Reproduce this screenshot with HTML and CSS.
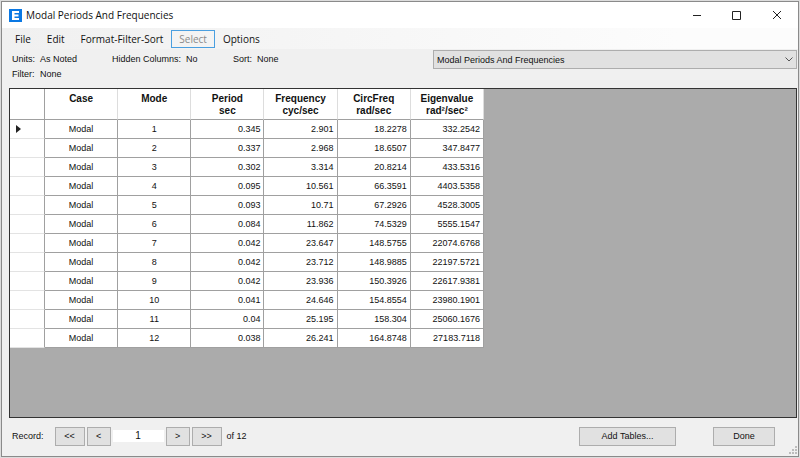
FILE: index.html
```html
<!DOCTYPE html>
<html lang="en">
  <head>
    <meta charset="UTF-8" />
    <meta name="viewport" content="width=device-width, initial-scale=1.0" />
    <title>Modal Periods And Frequencies</title>
    <link rel="stylesheet" href="styles.css">
  </head>

  <body>
    <div class="window">
      <header class="titlebar">
        <svg class="logo" viewBox="0 0 13 13" aria-hidden="true">
          <rect width="13" height="13" fill="#0b78e3" />
          <path d="M3 2h7v2H5.500v1.500H9.500v2H5.500V9H10v2H3z" fill="#fff" />
        </svg>
        <h1>Modal Periods And Frequencies</h1>
        <div class="controls">
          <button type="button" aria-label="Minimize"><svg viewBox="0 0 10 10"><path d="M1 5.500h8" /></svg></button>
          <button type="button" aria-label="Maximize"><svg viewBox="0 0 10 10"><path d="M.5 1.500h8v8h-8z" /></svg></button>
          <button type="button" aria-label="Close"><svg viewBox="0 0 10 10"><path d="M1 1l8 8M9 1l-8 8" /></svg></button>
        </div>
      </header>

      <nav class="menu">
        <button type="button">File</button>
        <button type="button">Edit</button>
        <button type="button">Format-Filter-Sort</button>
        <button type="button" class="selected" disabled>Select</button>
        <button type="button">Options</button>
      </nav>

      <section class="info">
        <dl class="units"><dt>Units:</dt><dd>As Noted</dd><dt>Filter:</dt><dd>None</dd></dl>
        <dl class="hidden-columns"><dt>Hidden Columns:</dt><dd>No</dd></dl>
        <dl><dt>Sort:</dt><dd>None</dd></dl>
        <div class="picker">
          <select id="table" aria-label="Table">
            <option>Modal Periods And Frequencies</option>
          </select>
          <svg viewBox="0 0 8 5" aria-hidden="true"><path d="M.5 .5l3.500 3.500 3.500-3.500" /></svg>
        </div>
      </section>

      <main class="grid">
        <table>
          <thead>
            <tr>
              <th class="mark"></th>
              <th>Case</th>
              <th>Mode</th>
              <th>Period<br>sec</th>
              <th>Frequency<br>cyc/sec</th>
              <th>CircFreq<br>rad/sec</th>
              <th>Eigenvalue<br>rad²/sec²</th>
            </tr>
          </thead>
          <tbody>
            <tr><td class="mark"><svg viewBox="0 0 5 8"><path d="M0 0l5 4-5 4z" /></svg></td><td>Modal</td><td>1</td><td>0.345</td><td>2.901</td><td>18.2278</td><td>332.2542</td></tr>
            <tr><td class="mark"></td><td>Modal</td><td>2</td><td>0.337</td><td>2.968</td><td>18.6507</td><td>347.8477</td></tr>
            <tr><td class="mark"></td><td>Modal</td><td>3</td><td>0.302</td><td>3.314</td><td>20.8214</td><td>433.5316</td></tr>
            <tr><td class="mark"></td><td>Modal</td><td>4</td><td>0.095</td><td>10.561</td><td>66.3591</td><td>4403.5358</td></tr>
            <tr><td class="mark"></td><td>Modal</td><td>5</td><td>0.093</td><td>10.71</td><td>67.2926</td><td>4528.3005</td></tr>
            <tr><td class="mark"></td><td>Modal</td><td>6</td><td>0.084</td><td>11.862</td><td>74.5329</td><td>5555.1547</td></tr>
            <tr><td class="mark"></td><td>Modal</td><td>7</td><td>0.042</td><td>23.647</td><td>148.5755</td><td>22074.6768</td></tr>
            <tr><td class="mark"></td><td>Modal</td><td>8</td><td>0.042</td><td>23.712</td><td>148.9885</td><td>22197.5721</td></tr>
            <tr><td class="mark"></td><td>Modal</td><td>9</td><td>0.042</td><td>23.936</td><td>150.3926</td><td>22617.9381</td></tr>
            <tr><td class="mark"></td><td>Modal</td><td>10</td><td>0.041</td><td>24.646</td><td>154.8554</td><td>23980.1901</td></tr>
            <tr><td class="mark"></td><td>Modal</td><td>11</td><td>0.04</td><td>25.195</td><td>158.304</td><td>25060.1676</td></tr>
            <tr><td class="mark"></td><td>Modal</td><td>12</td><td>0.038</td><td>26.241</td><td>164.8748</td><td>27183.7118</td></tr>
          </tbody>
        </table>
      </main>

      <footer class="footer">
        <label for="record">Record:</label>
        <div class="pager">
          <button type="button" class="wide" aria-label="First record">&lt;&lt;</button>
          <button type="button" aria-label="Previous record">&lt;</button>
          <input type="text" id="record" value="1" />
          <button type="button" aria-label="Next record">&gt;</button>
          <button type="button" class="wide" aria-label="Last record">&gt;&gt;</button>
        </div>
        <span>of 12</span>
        <div class="actions">
          <button type="button" class="add">Add Tables...</button>
          <button type="button" class="done">Done</button>
        </div>
        <svg class="grip" viewBox="0 0 8 8" aria-hidden="true">
          <path d="M6 0h2v2h-2zM3 3h2v2h-2zM6 3h2v2h-2zM0 6h2v2h-2zM3 6h2v2h-2zM6 6h2v2h-2z" />
        </svg>
      </footer>
    </div>
  </body>
</html>
```

FILE: styles.css
```css
* { box-sizing:border-box; }
body { margin:0; background:#dcdcdc; color:#111; font:9px/14px "Liberation Sans", Arial, sans-serif; }
button, input, select { font:inherit; color:inherit; margin:0; padding:0; border-radius:0; }

.window { display:flex; flex-direction:column; min-height:calc(100vh - 2px); margin:1px; border:1px solid #8a8a8a; background:#f0f0f0; }

.titlebar { display:flex; align-items:center; height:26px; padding-left:7px; background:#fff; }
.titlebar h1 { margin:0 0 0 4px; font:10px/16px "Open Sans", "Noto Sans", sans-serif; }
.logo { width:13px; height:13px; }
.controls { display:flex; margin-left:auto; padding-right:1px; }
.controls button { width:40px; height:26px; border:0; background:none; }
.controls svg { display:block; width:10px; height:10px; margin:auto; fill:none; stroke:#222; }

.menu { display:flex; align-items:center; height:21px; padding:0 5px; background:linear-gradient(to right, #f0f0f0, #fcfcfc 85%); }
.menu button { height:18px; padding:0 7px; border:1px solid transparent; background:none; font:10px/16px "Open Sans", "Noto Sans", sans-serif; }
.menu .selected { border-color:#4a9fe0; color:#8a8a8a; }

.info { display:flex; align-items:flex-start; height:39px; padding:1px 1px 0 10px; }
.info dl { display:grid; grid-template-columns:auto 1fr; column-gap:5px; line-height:15px; margin:2px 0 0; }
.info dd { margin:0; }
.info .units { width:100px; }
.info .hidden-columns { width:121px; }
.picker { position:relative; width:364px; margin-left:auto; }
.picker select { display:block; width:100%; height:19px; padding:0 20px 0 3px; border:1px solid #adadad; background:#e1e1e1; appearance:none; }
.picker svg { position:absolute; right:4px; top:7px; width:8px; height:5px; fill:none; stroke:#555; pointer-events:none; }

.grid { flex:1; margin:0 1px 0 7px; border:1px solid #333; background:#ababab; }
table { width:474px; border-collapse:separate; border-spacing:0; table-layout:fixed; background:#fff; }
th { height:31px; padding:4px 0 0; border-right:1px solid #ddd; border-bottom:1px solid #a0a0a0; font-size:10px; line-height:12px; vertical-align:top; }
td { height:19px; padding:0 3px; border-right:1px solid #a0a0a0; border-bottom:1px solid #a0a0a0; text-align:right; }
td:nth-child(2), td:nth-child(3) { text-align:center; }
.mark { width:35px; border-right-color:#a0a0a0; }
td.mark { padding:0 0 0 6px; border-bottom-color:#e3e3e3; }
.mark svg { display:block; width:5px; height:8px; fill:#222; }

.footer { display:flex; align-items:center; height:38px; padding:0 1px 2px 10px; }
.footer button { height:19px; border:1px solid #adadad; background:#e1e1e1; }
.pager { display:flex; align-items:center; gap:2px; margin:0 5px 0 11px; }
.pager button { width:24px; }
.pager .wide { width:30px; }
.pager input { width:51px; height:12px; border:0; background:#fff; text-align:center; font-size:10px; }
.actions { display:flex; gap:37px; margin-left:auto; padding-right:14px; }
.footer .add { width:97px; }
.footer .done { width:62px; }
.grip { align-self:flex-end; width:8px; height:8px; fill:#bcbcbc; }
```
